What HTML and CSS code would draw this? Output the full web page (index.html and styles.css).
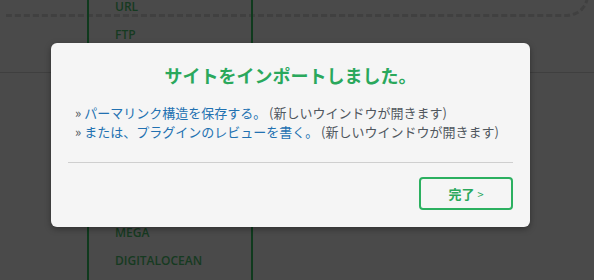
FILE: index.html
```html
<!DOCTYPE html>
<html lang="ja">
<head>
<meta charset="utf-8">
<link rel="stylesheet" href="styles.css">
</head>
<body>
<div class="page">
  <div class="dashbox"></div>
  <div class="hline"></div>
  <ul class="column">
    <li>URL</li>
    <li>FTP</li>
    <li class="hidden">GOOGLE DRIVE</li>
    <li class="hidden">DROPBOX</li>
    <li class="hidden">ONEDRIVE</li>
    <li class="hidden">BOX</li>
    <li class="hidden">AMAZON S3</li>
    <li class="hidden">BACKBLAZE B2</li>
    <li>MEGA</li>
    <li>DIGITALOCEAN</li>
  </ul>
</div>
<div class="dialog">
  <h2 class="title">サイトをインポートしました。</h2>
  <ul class="links">
    <li><span class="raquo">»</span> <a class="link" href="#">パーマリンク構造を保存する。</a> <span class="note">(新しいウインドウが開きます)</span></li>
    <li><span class="raquo">»</span> <a class="link" href="#">または、プラグインのレビューを書く。</a> <span class="note">(新しいウインドウが開きます)</span></li>
  </ul>
  <hr class="sep">
  <div class="actions">
    <button class="done">完了 <span class="arrow">&gt;</span></button>
  </div>
</div>
</body>
</html>
```
FILE: styles.css
```css
html, body {
  margin: 0;
  padding: 0;
}
body {
  width: 594px;
  height: 280px;
  overflow: hidden;
  background: #4a4a4a;
  font-family: "Noto Sans CJK JP", "Noto Sans", sans-serif;
}
.page {
  display: grid;
  height: 280px;
}
.page > * {
  grid-area: 1 / 1;
}
.dashbox {
  margin-top: -60px;
  margin-left: 6px;
  width: 583px;
  height: 77px;
  border-bottom: 3px dashed #404040;
  border-right: 3px dashed #404040;
  border-bottom-right-radius: 22px;
  box-sizing: border-box;
}
.hline {
  margin-top: 72px;
  height: 1px;
  background: #3f3f3f;
}
.column {
  list-style: none;
  margin: 0 0 0 87px;
  padding: 0 0 0 26px;
  width: 166px;
  height: 280px;
  box-sizing: border-box;
  border-left: 2px solid #0f3a1d;
  border-right: 2px solid #0f3a1d;
  overflow: hidden;
}
.column li {
  font-family: "Open Sans", sans-serif;
  font-weight: 600;
  font-size: 12px;
  color: #163a21;
  line-height: 28.2px;
}
.column li.hidden {
  visibility: hidden;
}
.column li:first-child {
  margin-top: -7px;
}
.dialog {
  position: absolute;
  left: 51px;
  top: 43px;
  width: 479px;
  height: 184px;
  box-sizing: border-box;
  background: #f5f5f5;
  border-radius: 6px;
  padding: 20px 17px 0;
  box-shadow: 0 2px 6px rgba(0, 0, 0, 0.35);
}
.title {
  margin: 0;
  font-size: 18px;
  font-weight: 700;
  line-height: 24px;
  color: #2aa85c;
  text-align: center;
}
.links {
  list-style: none;
  margin: 16px 0 0;
  padding: 0 0 0 7px;
}
.links li {
  font-size: 13px;
  line-height: 19px;
  color: #50575e;
  white-space: nowrap;
}
.raquo {
  color: #50575e;
}
.link {
  color: #2271b1;
  text-decoration: none;
}
.note {
  color: #50575e;
}
.sep {
  margin: 21px 0 0;
  border: 0;
  height: 1px;
  background: #cfcfcf;
}
.actions {
  display: flex;
  justify-content: flex-end;
  margin-top: 14px;
}
.done {
  width: 94px;
  height: 33px;
  border: 2px solid #2cb060;
  border-radius: 4px;
  background: transparent;
  color: #2aa85c;
  font-family: "Noto Sans CJK JP", sans-serif;
  font-weight: 700;
  font-size: 13px;
  padding: 0;
}
.arrow {
  font-weight: 400;
  font-size: 11px;
}
```
